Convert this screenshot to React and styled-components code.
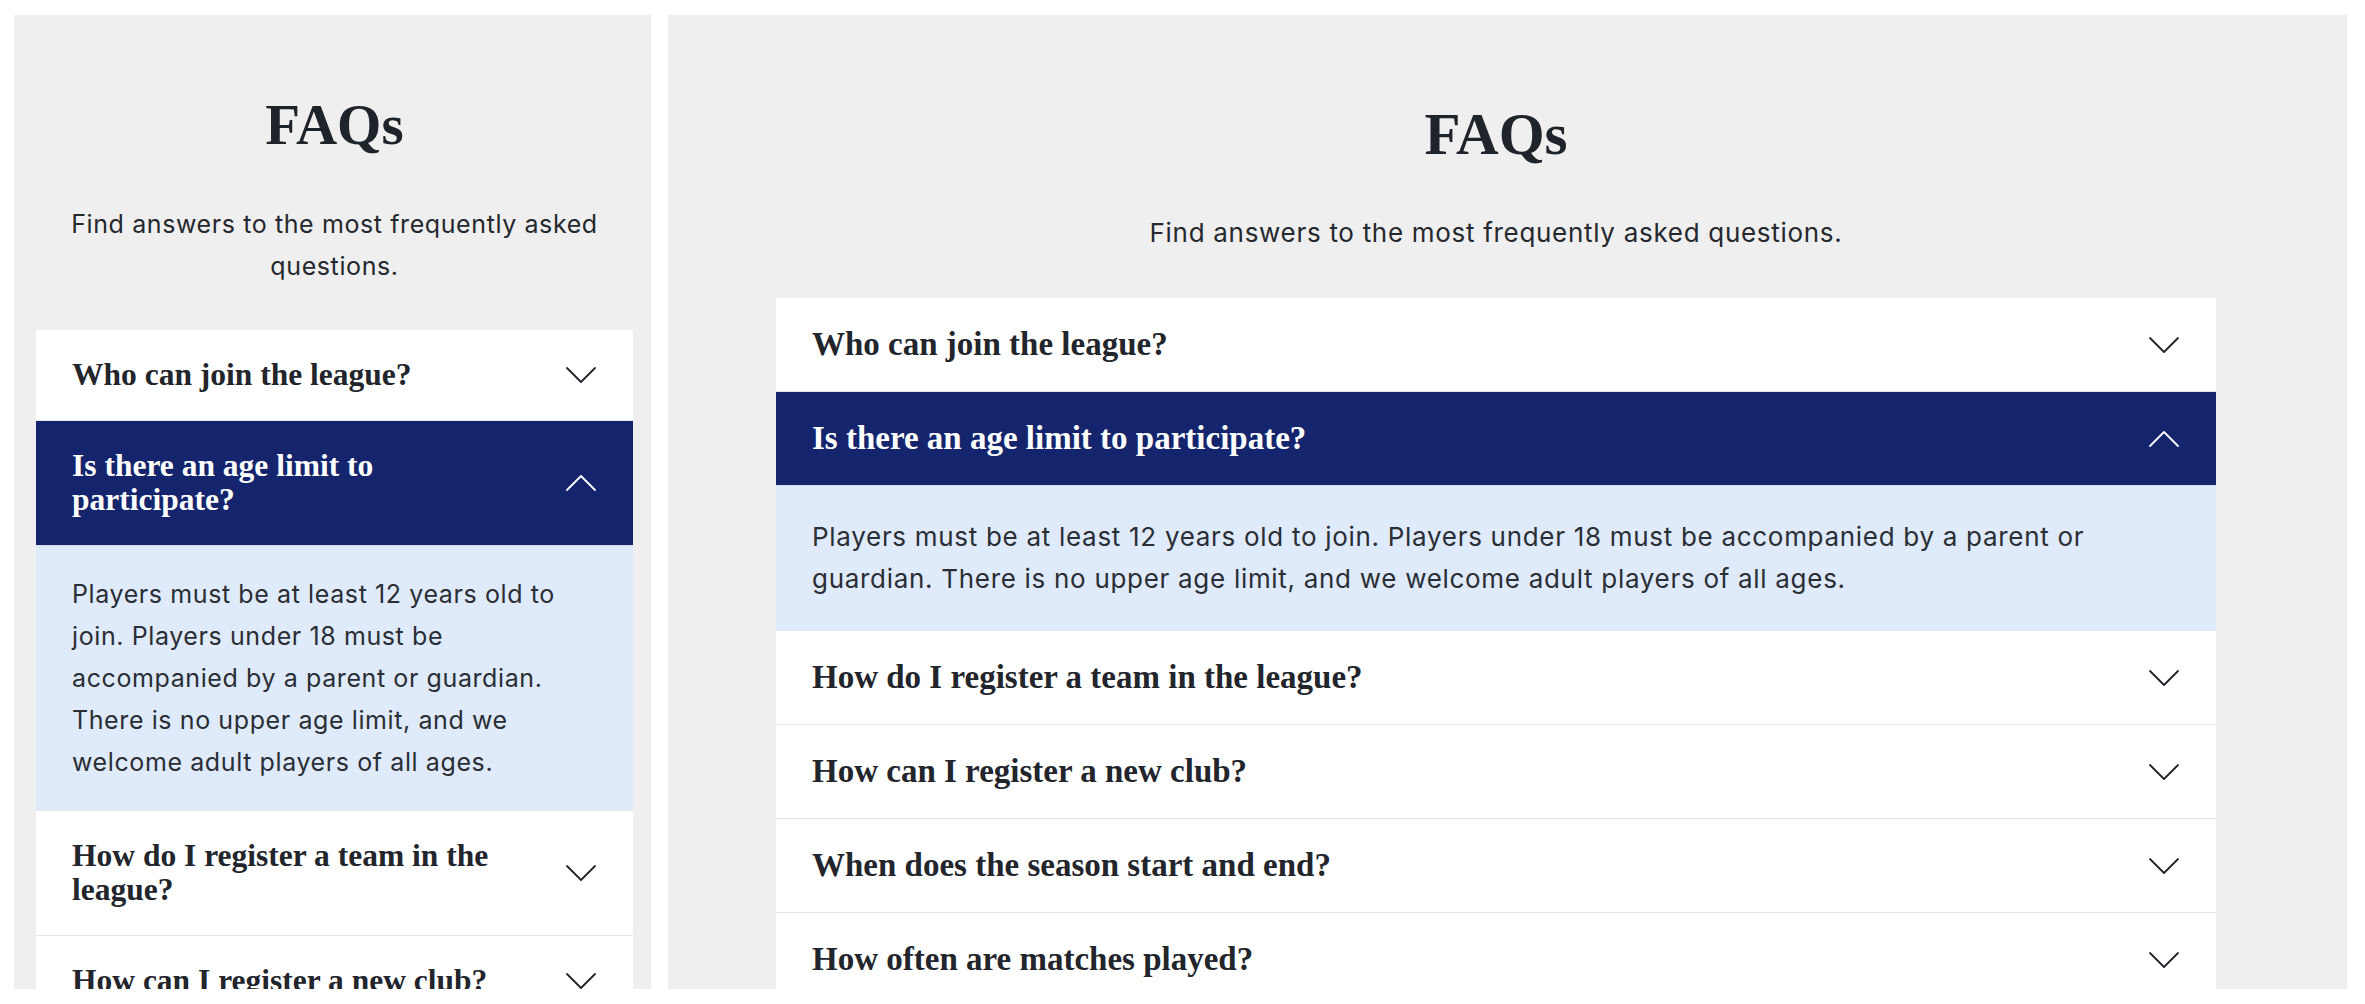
import React from 'react';
import styled, { createGlobalStyle } from 'styled-components';

const GlobalStyle = createGlobalStyle`
  html, body {
    margin: 0;
    padding: 0;
    background: #ffffff;
  }
  * {
    box-sizing: border-box;
  }
`;

const Page = styled.div`
  display: flex;
  gap: 17px;
  height: 1004px;
  padding: 15px 18px 15px 14px;
  overflow: hidden;
`;

const Panel = styled.section`
  flex: ${p => (p.$wide ? '1 1 auto' : '0 0 637px')};
  height: 974px;
  overflow: hidden;
  background: #efefef;
  padding: ${p => (p.$wide ? '83px 131px 0 108px' : '74px 18px 0 22px')};
`;

const Title = styled.h2`
  margin: 0;
  text-align: center;
  font-family: "Liberation Serif", "Times New Roman", serif;
  font-weight: 700;
  font-size: ${p => (p.$compact ? '57px' : '59px')};
  line-height: 72px;
  color: #1f232a;
`;

const Subtitle = styled.p`
  margin: 42px 0 ${p => (p.$compact ? '43px' : '44px')};
  text-align: center;
  font-family: Inter, "Noto Sans", sans-serif;
  font-size: ${p => (p.$compact ? '25px' : '26px')};
  letter-spacing: ${p => (p.$compact ? '0.6px' : '0.7px')};
  line-height: 42px;
  color: #25282d;
`;

const List = styled.div`
  display: flex;
  flex-direction: column;
  background: #ffffff;
`;

const Item = styled.div`
  border-bottom: 1px solid #e3e5e8;
`;

const Header = styled.div`
  display: flex;
  align-items: center;
  gap: ${p => (p.$compact ? '48px' : '36px')};
  padding: ${p => (p.$compact ? '28px 36px' : '30px 36px')};
  background: ${p => (p.$open ? '#14256d' : '#ffffff')};
  color: ${p => (p.$open ? '#ffffff' : '#22252b')};
  cursor: pointer;
`;

const Question = styled.h3`
  flex: 1;
  margin: 0;
  font-family: "Liberation Serif", "Times New Roman", serif;
  font-weight: 700;
  font-size: ${p => (p.$compact ? '31.5px' : '33px')};
  line-height: ${p => (p.$compact ? '34px' : '33px')};
`;

const Answer = styled.div`
  padding: ${p => (p.$compact ? '27px 36px' : '30px 36px')};
  background: #dfeafa;
  border-top: 1px solid #d3dcea;
  font-family: Inter, "Noto Sans", sans-serif;
  font-size: ${p => (p.$compact ? '25px' : '26px')};
  letter-spacing: ${p => (p.$compact ? '0.6px' : '0.7px')};
  line-height: 42px;
  color: #2a2e35;
`;

const Chevron = ({ up }) => (
  <svg width="32" height="32" viewBox="0 0 32 32" fill="none" style={{ flex: '0 0 32px' }}>
    <polyline
      points={up ? '2,23 16,9 30,23' : '2,9 16,23 30,9'}
      stroke="currentColor"
      strokeWidth="1.8"
      strokeLinecap="round"
      strokeLinejoin="round"
    />
  </svg>
);

const faqs = [
  { q: 'Who can join the league?' },
  {
    q: 'Is there an age limit to participate?',
    a: 'Players must be at least 12 years old to join. Players under 18 must be accompanied by a parent or guardian. There is no upper age limit, and we welcome adult players of all ages.',
    open: true,
  },
  { q: 'How do I register a team in the league?' },
  { q: 'How can I register a new club?' },
  { q: 'When does the season start and end?' },
  { q: 'How often are matches played?' },
  { q: 'What equipment do I need to play?' },
];

function Faq({ compact }) {
  return (
    <>
      <Title $compact={compact}>FAQs</Title>
      <Subtitle $compact={compact}>Find answers to the most frequently asked questions.</Subtitle>
      <List>
        {faqs.map(item => (
          <Item key={item.q}>
            <Header $open={item.open} $compact={compact}>
              <Question $compact={compact}>{item.q}</Question>
              <Chevron up={item.open} />
            </Header>
            {item.open && <Answer $compact={compact}>{item.a}</Answer>}
          </Item>
        ))}
      </List>
    </>
  );
}

export default function App() {
  return (
    <>
      <GlobalStyle />
      <Page>
        <Panel>
          <Faq compact />
        </Panel>
        <Panel $wide>
          <Faq />
        </Panel>
      </Page>
    </>
  );
}
